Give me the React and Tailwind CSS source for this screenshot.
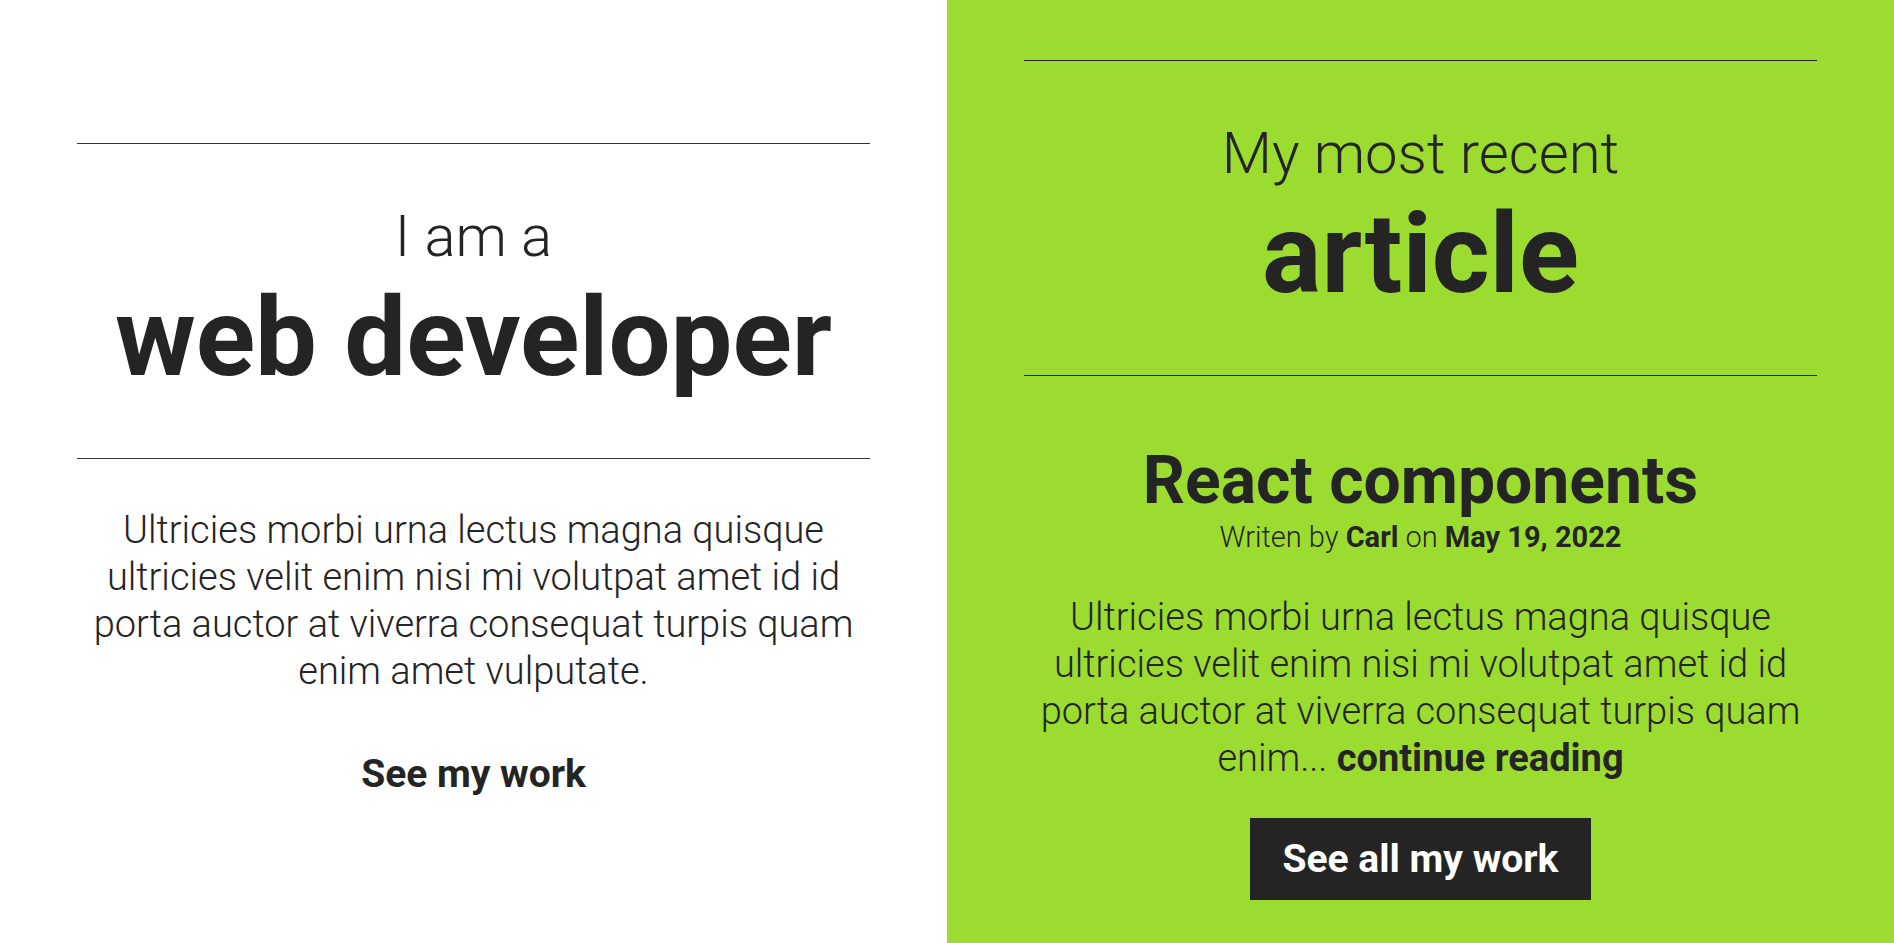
export default function App() {
  return (
    <div className="flex min-h-screen w-full font-['Roboto',sans-serif] text-[#242424]">
      {/* Intro */}
      <section className="flex w-1/2 flex-col items-center justify-center bg-white px-[77px]">
        <div className="w-full border-y border-[#333] pt-[63px] pb-[65px] text-center">
          <p className="text-[58px] leading-none font-light">I am a</p>
          <h1 className="mt-[17px] text-[110px] leading-[111px] font-bold">web developer</h1>
        </div>
        <p className="mt-12 text-center text-[38px] leading-[47px] font-light">
          Ultricies morbi urna lectus magna quisque ultricies velit enim nisi mi volutpat amet id id porta auctor at viverra consequat turpis quam enim amet vulputate.
        </p>
        <a href="#" className="mt-[52px] text-[39px] leading-[54px] font-bold">
          See my work
        </a>
      </section>

      {/* Latest article */}
      <section className="flex w-1/2 flex-col items-center justify-center bg-[#9cdc30] px-[77px] pt-4">
        <div className="w-full border-y border-[#242424] pt-[63px] pb-[65px] text-center">
          <p className="text-[58px] leading-none font-light">My most recent</p>
          <h2 className="mt-[17px] text-[111px] leading-none font-bold">article</h2>
        </div>
        <h3 className="mt-[72px] text-center text-[66px] leading-none font-bold">React components</h3>
        <p className="mt-px text-[29px] leading-[45px] font-light">
          Writen by <span className="font-bold">Carl</span> on <span className="font-bold">May 19, 2022</span>
        </p>
        <p className="mt-[34px] text-center text-[38px] leading-[47px] font-light">
          Ultricies morbi urna lectus magna quisque ultricies velit enim nisi mi volutpat amet id id porta auctor at viverra consequat turpis quam enim... <a href="#" className="font-bold">continue reading</a>
        </p>
        <a href="#" className="mt-9 bg-[#242424] px-[33px] py-[14px] text-[39px] leading-[54px] font-bold text-white">
          See all my work
        </a>
      </section>
    </div>
  );
}
